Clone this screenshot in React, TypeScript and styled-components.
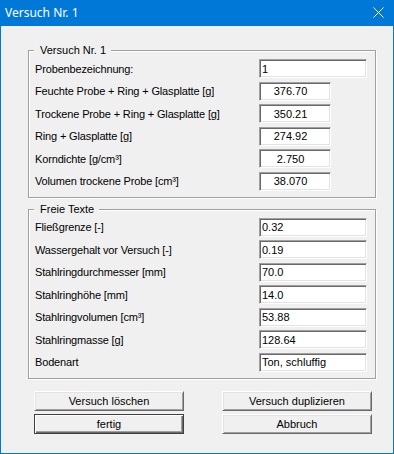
import React from 'react';
import styled, { createGlobalStyle } from 'styled-components';

const GlobalStyle = createGlobalStyle`
  html, body {
    margin: 0;
    padding: 0;
    background: #f0f0f0;
  }
  * {
    box-sizing: border-box;
  }
`;

const Window = styled.div`
  width: 394px;
  height: 454px;
  border: 1px solid #0078d7;
  border-top: none;
  background: #f0f0f0;
  display: flex;
  flex-direction: column;
  font-family: 'Liberation Sans', Arial, sans-serif;
  font-size: 11px;
  color: #000;
`;

const TitleBar = styled.div`
  height: 26px;
  flex-shrink: 0;
  background: #0078d7;
  color: #fff;
  display: flex;
  align-items: center;
  justify-content: space-between;
  padding: 0 9px 1px 4px;
  font-family: 'Noto Sans', 'Open Sans', sans-serif;
  font-size: 12px;
`;

const Body = styled.div`
  padding: 18px 17px 0 27px;
  display: flex;
  flex-direction: column;
`;

const Group = styled.fieldset`
  margin: 0 0 5px 0;
  padding: 2px 8px 6px 6px;
  border: 1px solid #a0a0a0;
  box-shadow: inset 1px 1px 0 #fff, 1px 1px 0 #fff;
  min-inline-size: 0;
`;

const Legend = styled.legend`
  margin-left: -1px;
  padding: 0 5px 0 6px;
  line-height: 13px;
  background: #f0f0f0;
`;

const Rows = styled.div`
  display: flex;
  flex-direction: column;
  gap: 3.5px;
`;

const Row = styled.div`
  display: grid;
  grid-template-columns: 224px auto;
  align-items: center;
  height: 19px;
`;

const Label = styled.span`
  white-space: nowrap;
  letter-spacing: -0.15px;
`;

const Field = styled.input<{ $width: number; $center?: boolean }>`
  width: ${(p) => p.$width}px;
  height: 19px;
  margin: 0;
  padding: ${(p) => (p.$center ? '0 9px 0 0' : '0 2px')};
  font-family: 'Liberation Sans', Arial, sans-serif;
  font-size: 11px;
  color: #000;
  background: #fff;
  text-align: ${(p) => (p.$center ? 'center' : 'left')};
  border: 1px solid;
  border-color: #a0a0a0 #fff #fff #a0a0a0;
  box-shadow: inset 1px 1px 0 #696969, inset -1px -1px 0 #e3e3e3;
  outline: none;
`;

const Buttons = styled.div`
  display: grid;
  grid-template-columns: 150px 150px;
  column-gap: 38px;
  row-gap: 3px;
  padding-left: 6px;
  margin-top: 7px;
`;

const Button = styled.button<{ $default?: boolean }>`
  height: 20px;
  margin: 0;
  padding: 0;
  font-family: 'Liberation Sans', Arial, sans-serif;
  font-size: 11px;
  color: #000;
  background: #f0f0f0;
  border: 1px solid;
  border-color: ${(p) => (p.$default ? '#404040' : '#fff #696969 #696969 #fff')};
  box-shadow: ${(p) =>
    p.$default
      ? 'inset 1px 1px 0 #fff, inset -1px -1px 0 #696969, inset -2px -2px 0 #a0a0a0'
      : 'inset 1px 1px 0 #e3e3e3, inset -1px -1px 0 #a0a0a0'};
`;

const CloseIcon = () => (
  <svg width="11" height="11" viewBox="0 0 11 11">
    <path d="M0.5 0.5 L10.5 10.5 M10.5 0.5 L0.5 10.5" stroke="#fff" strokeWidth="1" fill="none" />
  </svg>
);

const versuch = [
  { label: 'Probenbezeichnung:', value: '1', wide: true },
  { label: 'Feuchte Probe + Ring + Glasplatte [g]', value: '376.70' },
  { label: 'Trockene Probe + Ring + Glasplatte [g]', value: '350.21' },
  { label: 'Ring + Glasplatte [g]', value: '274.92' },
  { label: 'Korndichte [g/cm³]', value: '2.750' },
  { label: 'Volumen trockene Probe [cm³]', value: '38.070' },
];

const freieTexte = [
  { label: 'Fließgrenze [-]', value: '0.32' },
  { label: 'Wassergehalt vor Versuch [-]', value: '0.19' },
  { label: 'Stahlringdurchmesser [mm]', value: '70.0' },
  { label: 'Stahlringhöhe [mm]', value: '14.0' },
  { label: 'Stahlringvolumen [cm³]', value: '53.88' },
  { label: 'Stahlringmasse [g]', value: '128.64' },
  { label: 'Bodenart', value: 'Ton, schluffig' },
];

const App: React.FC = () => {
  return (
    <>
      <GlobalStyle />
      <Window>
        <TitleBar>
          <span>Versuch Nr. 1</span>
          <CloseIcon />
        </TitleBar>
        <Body>
          <Group>
            <Legend>Versuch Nr. 1</Legend>
            <Rows>
              {versuch.map((row) => (
                <Row key={row.label}>
                  <Label>{row.label}</Label>
                  <Field
                    readOnly
                    value={row.value}
                    $width={row.wide ? 108 : 72}
                    $center={!row.wide}
                  />
                </Row>
              ))}
            </Rows>
          </Group>
          <Group>
            <Legend>Freie Texte</Legend>
            <Rows>
              {freieTexte.map((row) => (
                <Row key={row.label}>
                  <Label>{row.label}</Label>
                  <Field readOnly value={row.value} $width={108} />
                </Row>
              ))}
            </Rows>
          </Group>
          <Buttons>
            <Button>Versuch löschen</Button>
            <Button>Versuch duplizieren</Button>
            <Button $default>fertig</Button>
            <Button>Abbruch</Button>
          </Buttons>
        </Body>
      </Window>
    </>
  );
};

export default App;
